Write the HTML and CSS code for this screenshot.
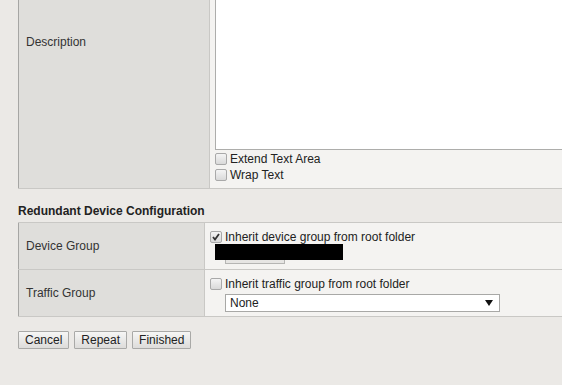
FILE: index.html
```html
<!DOCTYPE html>
<html lang="en">
<head>
  <meta charset="UTF-8" />
  <title>Virtual Server Properties</title>
  <link rel="stylesheet" href="styles.css">
</head>
<body>
  <main class="page">
    <table class="props props-general">
      <colgroup>
        <col class="col-label">
        <col>
      </colgroup>
      <tr>
        <td class="label">Description</td>
        <td class="value">
          <textarea class="desc-box"></textarea>
          <label class="check-row"><input type="checkbox"> Extend Text Area</label>
          <label class="check-row"><input type="checkbox"> Wrap Text</label>
        </td>
      </tr>
    </table>

    <h3 class="section-title">Redundant Device Configuration</h3>
    <table class="props props-redundant">
      <colgroup>
        <col class="col-label">
        <col>
      </colgroup>
      <tr>
        <td class="label">Device Group</td>
        <td class="value">
          <label class="check-row"><input type="checkbox" checked> Inherit device group from root folder</label>
          <div class="masked">
            <span class="masked-btn"></span>
            <span class="redact"></span>
          </div>
        </td>
      </tr>
      <tr>
        <td class="label">Traffic Group</td>
        <td class="value">
          <label class="check-row"><input type="checkbox"> Inherit traffic group from root folder</label>
          <select class="group-select">
            <option>None</option>
          </select>
        </td>
      </tr>
    </table>

    <div class="actions">
      <button>Cancel</button>
      <button>Repeat</button>
      <button>Finished</button>
    </div>
  </main>
</body>
</html>
```

FILE: styles.css
```css
html {
  overflow: hidden;
}

body {
  margin: 0;
  background: #ebe9e6;
  font-family: "Liberation Sans", Arial, sans-serif;
  font-size: 12px;
  color: #333;
}

.page {
  padding: 0 0 0 18px;
}

.props {
  border-collapse: collapse;
  table-layout: fixed;
  width: 720px;
  border-left: 1px solid #a6a6a4;
  border-bottom: 1px solid #a6a6a4;
}

.props td {
  border: 1px solid #c9c8c5;
  border-left: none;
  padding: 0;
}

.props-general {
  margin-top: -106px;
}

.props-general .col-label {
  width: 191px;
}

.props-redundant {
  border-top: 1px solid #a6a6a4;
}

.props-redundant .col-label {
  width: 186px;
}

.label {
  background: #dfdedb;
  padding-left: 7px !important;
  vertical-align: middle;
}

.props-redundant .label {
  height: 46px;
}

.value {
  background: #f4f3f1;
  vertical-align: top;
}

.props-general .value {
  padding: 4px 0 5px 5px !important;
}

.props-redundant .value {
  padding: 6px 0 4px 5px !important;
}

.desc-box {
  display: block;
  width: 700px;
  height: 251px;
  margin: 0;
  border: 1px solid #adadab;
  background: #fff;
  resize: none;
  box-sizing: border-box;
}

.check-row {
  display: flex;
  align-items: center;
  gap: 3px;
  height: 16px;
  line-height: 16px;
  color: #222;
}

.check-row input {
  appearance: none;
  width: 12px;
  height: 12px;
  margin: 0;
  border: 1px solid #a9a9a9;
  border-radius: 2px;
  background: linear-gradient(#f4f4f4, #d9d9d9);
  box-sizing: border-box;
}

.check-row input:checked {
  background: url("data:image/svg+xml;utf8,<svg xmlns='http://www.w3.org/2000/svg' width='10' height='10'><path d='M2 5 L4 7.5 L8 2' fill='none' stroke='%23333' stroke-width='1.8'/></svg>") center no-repeat, linear-gradient(#f4f4f4, #d9d9d9);
}

.desc-box + .check-row {
  margin-top: 1px;
}

.section-title {
  margin: 15px 0 4px;
  font-size: 12px;
  font-weight: bold;
  color: #222;
}

.masked {
  position: relative;
  height: 19px;
}

.masked-btn {
  position: absolute;
  left: 15px;
  top: 2px;
  width: 60px;
  height: 17px;
  border: 1px solid #b5b5b3;
  background: #e6e5e3;
  box-sizing: border-box;
}

.redact {
  position: absolute;
  left: 5px;
  top: -1px;
  width: 128px;
  height: 16px;
  background: #000;
}

.group-select {
  display: block;
  appearance: none;
  width: 275px;
  height: 18px;
  margin: 2px 0 0 15px;
  padding: 0 0 0 4px;
  border: 1px solid #a8a8a6;
  background: #fff url("data:image/svg+xml;utf8,<svg xmlns='http://www.w3.org/2000/svg' width='8' height='6'><path d='M0 0 H8 L4 6 Z' fill='%23111'/></svg>") right 6px center no-repeat;
  font-family: inherit;
  font-size: 12px;
  color: #222;
}

.actions {
  display: flex;
  gap: 5px;
  margin-top: 14px;
}

.actions button {
  height: 18px;
  padding: 0 6px;
  border: 1px solid #a9a9a7;
  border-radius: 1px;
  background: linear-gradient(#f6f6f5, #dddcda);
  font-family: inherit;
  font-size: 12px;
  color: #222;
}
```
